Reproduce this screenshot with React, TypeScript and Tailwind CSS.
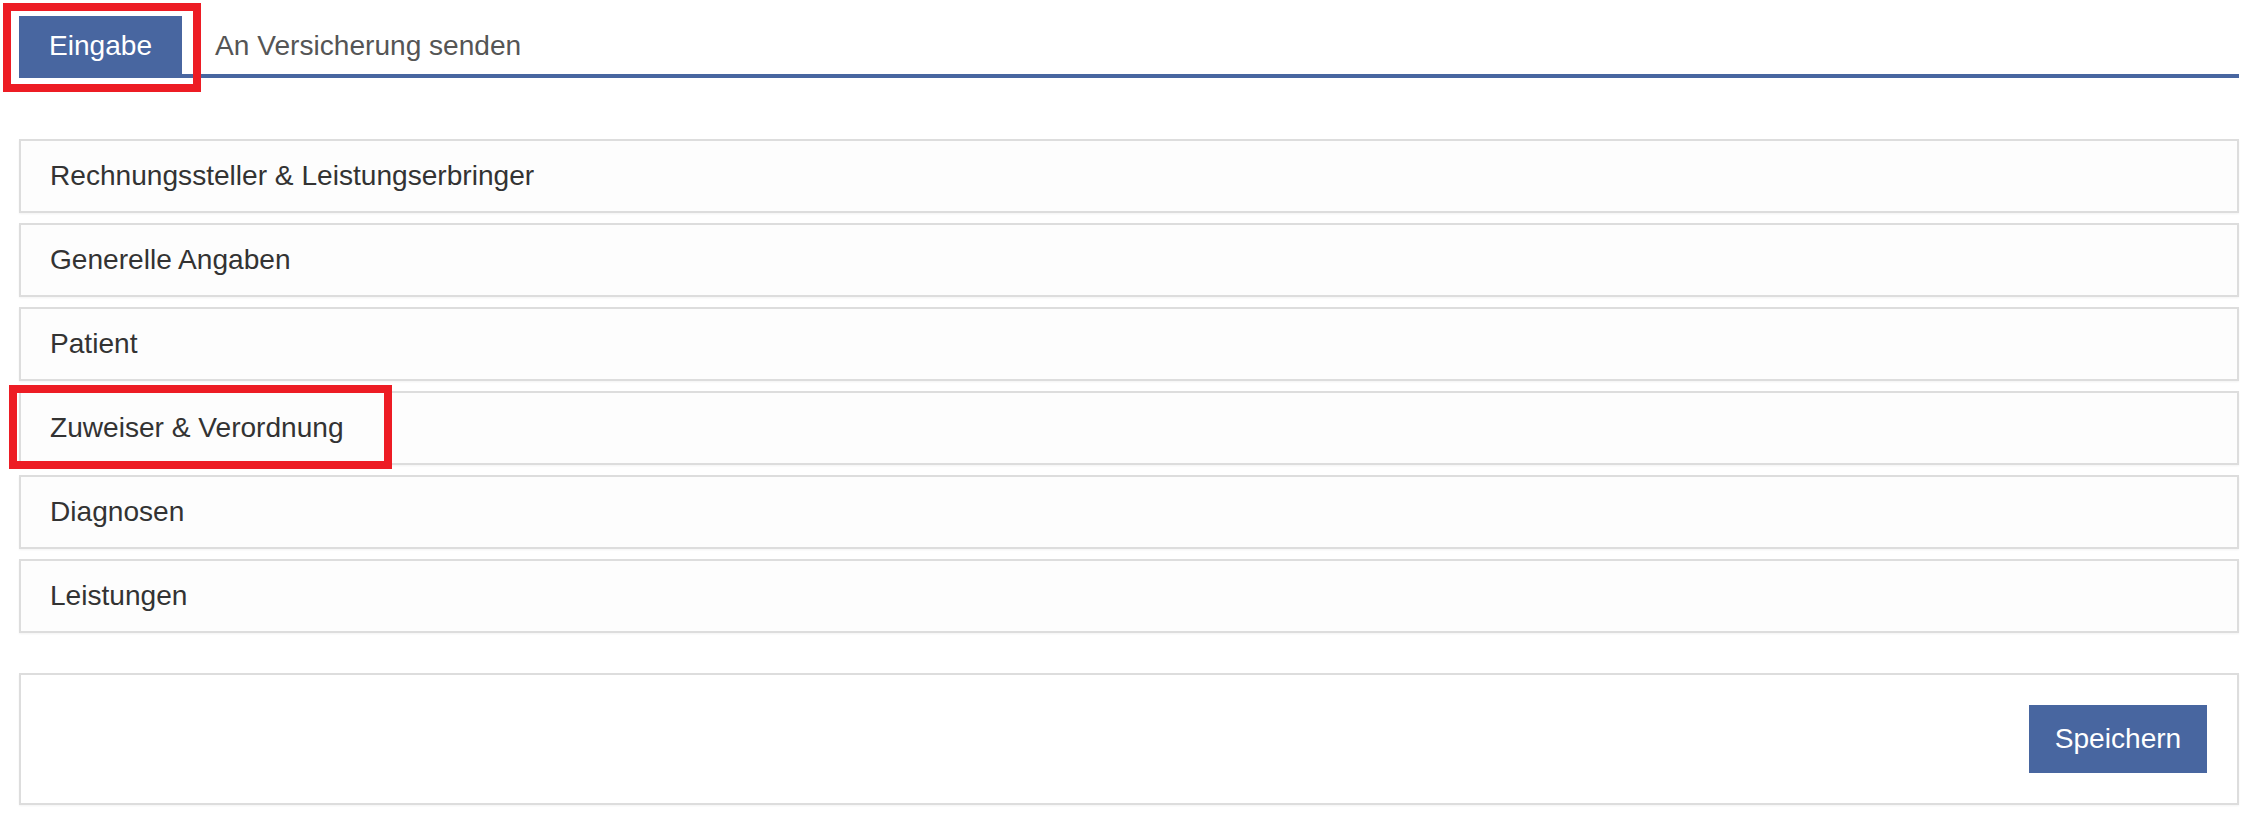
import React from "react";

const sections = [
  "Rechnungssteller & Leistungserbringer",
  "Generelle Angaben",
  "Patient",
  "Zuweiser & Verordnung",
  "Diagnosen",
  "Leistungen",
];

export default function App() {
  return (
    <div className="relative min-h-screen bg-white pl-[19px] pr-[17px] pt-[16px] font-['Liberation_Sans',Arial,sans-serif] text-[28.1px] text-[#333]">
      {/* Tabs */}
      <div className="flex border-b-4 border-[#4866a0]">
        <div className="-mb-[4px] flex h-[62px] items-center bg-[#4866a0] px-[30px] pb-[2px] text-white">
          Eingabe
        </div>
        <div className="ml-[2px] flex h-[58px] items-center px-[31px] pt-[2px] text-[#555]">
          An Versicherung senden
        </div>
      </div>

      {/* Sections */}
      <div className="mt-[61px] flex flex-col gap-[10px]">
        {sections.map((s) => (
          <div
            key={s}
            className="flex h-[74px] items-center border-2 border-[#dddddd] bg-[#fdfdfd] pl-[29px] pt-[1px] shadow-[0_1px_2px_rgba(0,0,0,0.05)]"
          >
            {s}
          </div>
        ))}
      </div>

      {/* Save box */}
      <div className="mt-[40px] flex justify-end border-2 border-[#dddddd] bg-white p-[30px] shadow-[0_1px_2px_rgba(0,0,0,0.05)]">
        <button className="flex h-[68px] w-[178px] items-center justify-center bg-[#4866a0] text-white">
          Speichern
        </button>
      </div>

      {/* Red annotation boxes */}
      <div className="pointer-events-none absolute left-[3px] top-[3px] h-[89px] w-[198px] border-[8px] border-[#ed1c24]" />
      <div className="pointer-events-none absolute left-[9px] top-[385px] h-[84px] w-[383px] border-[8px] border-[#ed1c24]" />
    </div>
  );
}
